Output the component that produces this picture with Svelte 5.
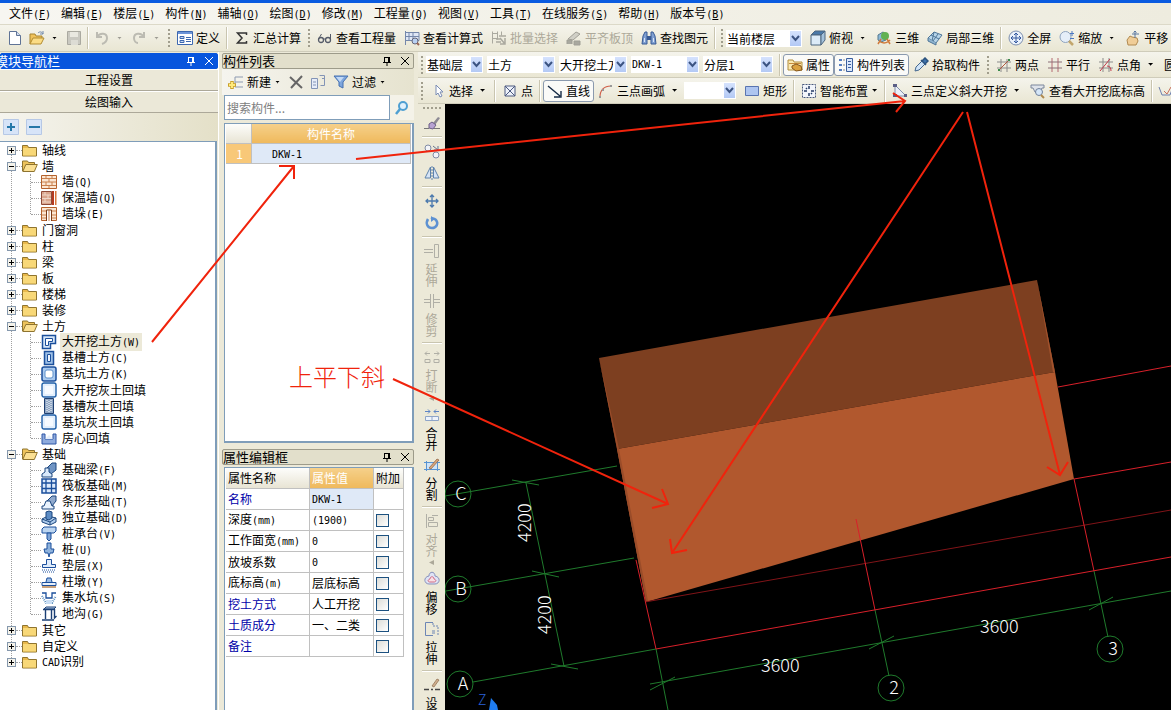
<script>
  const menus = ['文件(_F)', '编辑(_E)', '楼层(_L)', '构件(_N)', '辅轴(_O)', '绘图(_D)', '修改(_M)', '工程量(_Q)', '视图(_V)', '工具(_T)', '在线服务(_S)', '帮助(_H)', '版本号(_B)'];

  // 'sep' is an etched line, 'grip' the dotted toolbar handle
  const mainBar = [
    { icon: 'page' },
    { icon: 'open', caret: true },
    { icon: 'save', off: true },
    'sep',
    { icon: 'undo', off: true, caret: true },
    { icon: 'redo', off: true, caret: true },
    'grip',
    { icon: 'define', text: '定义' },
    'sep',
    { icon: 'sum', text: '汇总计算' },
    'grip',
    { icon: 'glasses', text: '查看工程量' },
    { icon: 'formula', text: '查看计算式' },
    { icon: 'batch', text: '批量选择', off: true },
    { icon: 'align', text: '平齐板顶', off: true },
    { icon: 'find', text: '查找图元' },
    'sep',
    'grip',
    { combo: '当前楼层', width: 'w76' },
    { icon: 'cube', text: '俯视', caret: true },
    { icon: 'orbit', text: '三维' },
    { icon: 'part3d', text: '局部三维' },
    'sep',
    { icon: 'fit', text: '全屏' },
    { icon: 'zoom', text: '缩放', caret: true },
    { icon: 'pan', text: '平移' },
  ];

  const pickBar = [
    'grip',
    { combo: '基础层', width: 'w57' },
    { combo: '土方', width: 'w68' },
    { combo: '大开挖土方', width: 'w68' },
    { combo: 'DKW-1', width: 'w68' },
    { combo: '分层1', width: 'w70' },
    'sep',
    { icon: 'props', text: '属性', on: true },
    { icon: 'list', text: '构件列表', on: true },
    { icon: 'dropper', text: '拾取构件' },
    'grip',
    { icon: 'twopt', text: '两点' },
    { icon: 'parallel', text: '平行' },
    { icon: 'angle', text: '点角', caret: true },
    { text: '圆' },
  ];

  const drawBar = [
    'grip',
    { icon: 'cursor', text: '选择', caret: true },
    'sep',
    { icon: 'point', text: '点' },
    'sep',
    { icon: 'line', text: '直线', on: true },
    { icon: 'arc', text: '三点画弧', caret: true },
    { combo: '', width: 'w52' },
    { icon: 'rect', text: '矩形' },
    'sep',
    { icon: 'smart', text: '智能布置', caret: true, tight: true },
    'sep',
    { icon: 'slope', text: '三点定义斜大开挖', caret: true },
    { icon: 'viewpit', text: '查看大开挖底标高' },
    'sep',
    { icon: 'edge', name: '放坡' },
  ];

  const sideBar = [
    { icon: 'erase', name: '删除' },
    'sep',
    { icon: 'copy', name: '复制' },
    { icon: 'mirror', name: '镜像' },
    'sep',
    { icon: 'move', name: '移动' },
    { icon: 'rotate', name: '旋转' },
    'sep',
    { icon: 'extend', text: '延伸', off: true },
    { icon: 'trim', text: '修剪', off: true },
    'sep',
    { icon: 'split', text: '打断', off: true, more: true },
    { icon: 'merge', text: '合并' },
    { icon: 'divide', text: '分割' },
    'sep',
    { icon: 'sidealign', text: '对齐', off: true, more: true },
    { icon: 'offset', text: '偏移' },
    { icon: 'stretch', text: '拉伸' },
    'sep',
    { icon: 'setup', text: '设置' },
  ];

  let selected = $state('大开挖土方(W)');
  let tree = $state([
    { text: '轴线' },
    {
      text: '墙',
      open: true,
      items: [
        { icon: 'wall', text: '墙(Q)' },
        { icon: 'wall2', text: '保温墙(Q)' },
        { icon: 'wall3', text: '墙垛(E)' },
      ],
    },
    { text: '门窗洞' },
    { text: '柱' },
    { text: '梁' },
    { text: '板' },
    { text: '楼梯' },
    { text: '装修' },
    {
      text: '土方',
      open: true,
      items: [
        { icon: 'pit', text: '大开挖土方(W)' },
        { icon: 'trench', text: '基槽土方(C)' },
        { icon: 'hole', text: '基坑土方(K)' },
        { icon: 'fill', text: '大开挖灰土回填' },
        { icon: 'trenchfill', text: '基槽灰土回填' },
        { icon: 'fill', text: '基坑灰土回填' },
        { icon: 'roomfill', text: '房心回填' },
      ],
    },
    {
      text: '基础',
      open: true,
      items: [
        { icon: 'fbeam', text: '基础梁(F)' },
        { icon: 'raft', text: '筏板基础(M)' },
        { icon: 'strip', text: '条形基础(T)' },
        { icon: 'pad', text: '独立基础(D)' },
        { icon: 'cap', text: '桩承台(V)' },
        { icon: 'pile', text: '桩(U)' },
        { icon: 'cushion', text: '垫层(X)' },
        { icon: 'pier', text: '柱墩(Y)' },
        { icon: 'sump', text: '集水坑(S)' },
        { icon: 'ditch', text: '地沟(G)' },
      ],
    },
    { text: '其它' },
    { text: '自定义' },
    { text: 'CAD识别' },
  ]);

  const props = [
    { name: '名称', value: 'DKW-1', blue: true, current: true },
    { name: '深度(mm)', value: '(1900)' },
    { name: '工作面宽(mm)', value: '0' },
    { name: '放坡系数', value: '0' },
    { name: '底标高(m)', value: '层底标高' },
    { name: '挖土方式', value: '人工开挖', blue: true },
    { name: '土质成分', value: '一、二类', blue: true },
    { name: '备注', value: '', blue: true },
  ];

  const fillBox = '<rect x="1" y="1" width="14" height="14" rx="2" fill="#e3effc" stroke="#1f5fa8" stroke-width="1.4"/><rect x="4" y="4" width="8" height="8" fill="#f6faff"/>';
  const grid = '<path d="M5 1v14M10.500 1v14M1 5h14M1 10.500h14"';

  const icons = {
    page: '<path d="M2.500 1.500h7l4 4v9h-11z" fill="#fff" stroke="#5f7396"/><path d="M9.500 1.500v4h4" fill="#cfdcf0" stroke="#5f7396"/>',
    open: '<path d="M1 14V4h5l1 2h6v3" fill="#f0c25a" stroke="#a8842e"/><path d="M1 14l3-6h11l-3 6z" fill="#fbdc85" stroke="#b38d32"/><path d="M9 3c2-2 4-1 5 1m0-3v3h-3" fill="none" stroke="#7089ad"/>',
    save: '<path d="M1.500 1.500h13v13h-13z" fill="#c9c8c0" stroke="#aaa9a0"/><path d="M4 2h8v5H4z" fill="#e9e8e0"/><path d="M5 10h7v5H5z" fill="#dddcd4"/>',
    undo: '<path d="M3 2v5h5M3 7c3-5 10-4 10 1 0 3-2 5-5 6" fill="none" stroke="#bcbbb2" stroke-width="2"/>',
    redo: '<path d="M13 2v5H8m5 0C10 2 3 3 3 8c0 3 2 5 4 5" fill="none" stroke="#bcbbb2" stroke-width="2"/>',
    define: '<path d="M.5 1.500h15v13H.5z" fill="#fff" stroke="#3d68b0"/><path d="M1 2h14v2H1z" fill="#6d95d8"/><path d="M3 6.500h4v2H3zM3 10.500h4v2H3z" fill="#c9daf5" stroke="#3d68b0"/><path d="M9 7.500h5M9 9.500h5M9 11.500h5" stroke="#3d68b0"/>',
    sum: '<path d="M12.500 5V3h-9l4.500 5-4.500 5h9v-2" fill="none" stroke="#333" stroke-width="1.500"/>',
    glasses: '<circle cx="4" cy="10" r="2.500" fill="none" stroke="#555b68" stroke-width="1.300"/><circle cx="11" cy="10" r="2.500" fill="none" stroke="#555b68" stroke-width="1.300"/><path d="M1.500 9l3-5M6.500 9h2M13.500 10V4" stroke="#555b68" fill="none"/>',
    formula: '<path d="M1.500 1v14M1 2.500h14v8H1M5 3v7M9 3v7M1 6.500h14" fill="#dfe7f6" stroke="#7487ab"/><circle cx="11" cy="11" r="3" fill="#b8d0f2" stroke="#667"/><path d="M13 13l2 2" stroke="#965" stroke-width="2"/>',
    batch: '<path d="M1.500 1.500v12M1 3.500h5M1 8.500h5M6.500 1.500v8M10.500 1.500v4" fill="none" stroke="#aaa99f"/><path d="M8 6h7M5 9h5M5 12h5M9 8l5 6M14 8v6H9" fill="none" stroke="#aaa99f" stroke-width="1.500"/>',
    align: '<path d="M2 9l8-7 4 2-7 6z" fill="#d0cfc6" stroke="#a09f96"/><path d="M1 14v-4h5v4M8 11h6v4H8z" fill="#a9a89f" stroke="#a09f96"/>',
    find: '<path d="M1 14l1-8 2-4h2v12zM15 14l-1-8-2-4h-2v12z" fill="#7f9fd2" stroke="#385a94"/><path d="M6 6h4v4H6z" fill="#385a94"/><path d="M3.500 8v4M12.500 8v4" stroke="#d7e4f8"/>',
    cube: '<path d="M1 5l4-4h10l-4 4z" fill="#4a79a8" stroke="#4d667f"/><path d="M1 5h10v10H1z" fill="#dcebf7" stroke="#4d667f"/><path d="M11 5l4-4v9l-4 5z" fill="#a4c2dc" stroke="#4d667f"/>',
    orbit: '<path d="M2 5l5-3 3 2v6l-5 2-3-2z" fill="#8bb8d8" stroke="#55788f"/><circle cx="9" cy="6" r="4" fill="#62b152"/><path d="M3 11c4 3 8 2 11-1M5 9l-3 5M11 9l3 5" fill="none" stroke="#d07a3a" stroke-width="1.500"/>',
    part3d: '<path d="M1 8l6-6 8 3-6 8z" fill="#b7d5ea" stroke="#4f7698"/><path d="M4 5l8 4M7 2L5 11M11 4l-5 7" stroke="#4f7698" fill="none"/><path d="M1 8v3l8 4v-2" fill="#8eb3cf" stroke="#4f7698"/>',
    fit: '<circle cx="8" cy="8" r="7" fill="#eaf1fb" stroke="#7d8fae"/><path d="M8 3v10M3 8h10M6 5l2-2 2 2M6 11l2 2 2-2M5 6L3 8l2 2M11 6l2 2-2 2" fill="none" stroke="#33589f"/>',
    zoom: '<circle cx="6.500" cy="7" r="5.500" fill="#e5eef8" stroke="#8ea3be"/><path d="M10 11l4 4" stroke="#c2a66c" stroke-width="2.500"/><path d="M13 1v5M11 3.500h4M11 8.500h4" stroke="#4b77c0"/>',
    pan: '<path d="M3 15l-1-5 3-4 2 1 5 1 1 3-2 4z" fill="#f0cd97" stroke="#b18a50"/><path d="M10 1v7M7 4h7M8.500 2.500L10 1l1.500 1.500" stroke="#5976a0" fill="none"/>',
    props: '<path d="M1 13V3h5l1 2h8v8z" fill="#fbe9b0" stroke="#b08d3c"/><path d="M2 6h12v1H2z" fill="#c58a3b"/><path d="M5 9l4-2 5 2 1 4-6 1-4-3z" fill="#dba23f" stroke="#86561c"/>',
    list: '<path d="M1 2h3v2H1zM1 7h3v2H1zM1 12h3v2H1z" fill="#577fc2"/><path d="M5 3h2M5 8h2M5 13h2" stroke="#888"/><path d="M8.500 1.500h6v13h-6z" fill="#dbe7fb" stroke="#3a5f9e"/><path d="M10 4.500h3M10 7.500h3M10 10.500h3" stroke="#3a5f9e"/>',
    dropper: '<path d="M2 14l1-4 6-6 3 3-6 6z" fill="#cfe3f7" stroke="#44688f"/><path d="M8 3l5 5M9 4l3-3 3 3-3 3z" fill="#3f74ad" stroke="#2c537f" stroke-width="1.500"/>',
    twopt: '<path d="M5 2v13M11 2v13M1 5h14M1 11h14" stroke="#8b8b8b"/><path d="M3 13L13 3" stroke="#b0573e"/><path d="M12 2h2v2h-2zM2 12h2v2H2z" fill="#3b8b4a"/>',
    parallel: '<path d="M5 1v14M11 1v14" stroke="#b46a72"/><path d="M1 5h14M1 11h14" stroke="#8b6f76"/>',
    angle: '<path d="M5 1v14M11 1v14M1 5h14M1 11h14" stroke="#8b8b8b"/><path d="M2 14L12 2M9 9c3 0 4 2 4 5" stroke="#c23a4b" fill="none"/>',
    cursor: '<path d="M6 2v10l2-2 2 4 2-1-2-4h3z" fill="#fff" stroke="#7a8db5"/>',
    point: '<path d="M3 3h10v10H3zM3 3l10 10M13 3L3 13" fill="#eef2fa" stroke="#4c5a80"/>',
    line: '<path d="M1 3l12 10M14 8v6H7" fill="none" stroke="#152a45" stroke-width="1.400"/>',
    arc: '<path d="M2 14C2 7 6 3 13 3" fill="none" stroke="#d0604a" stroke-width="1.200"/><path d="M1 13h2v2H1zM12 2h2v2h-2zM4 6h2v2H4z" fill="#999"/>',
    rect: '<path d="M1.500 3.500h13v9h-13z" fill="#aec5f0" stroke="#5974b0"/>',
    smart: '<path d="M1.500 1.500h13v13h-13z" fill="#f2f5fb" stroke="#48587c" stroke-dasharray="2 1"/><path d="M8 3v3M8 10v3M3 8h3M10 8h3M5 5l1 1M11 11l-1-1" stroke="#243a66" stroke-width="1.500"/>',
    slope: '<path d="M3 2v11h11M3 2l11 11" fill="#e9eef8" stroke="#8390aa"/><path d="M1 1h4v3H1zM1 11h4v3H1zM12 11h3v3h-3z" fill="#5b5f86"/>',
    viewpit: '<path d="M1 2h13v3h-2l-2 4H5L3 5H1z" fill="#dfe3ea" stroke="#7d879b"/><circle cx="9" cy="9" r="3.500" fill="#d5e6f8" stroke="#70809a"/><path d="M11 12l3 3" stroke="#b08a4e" stroke-width="2"/>',
    edge: '<path d="M1 4l3 8h8l3-8" fill="none" stroke="#6d7fae"/><path d="M6 8l3 3 4-7" fill="none" stroke="#c86f5c"/>',
    add: '<path d="M7 3h8M7 8h8M7 13h8M7 3v10" stroke="#8c99b0" fill="none"/><path d="M4 7v8M0 11h8" stroke="#c9a02a" stroke-width="3.500"/><path d="M4 8v6M1 11h6" stroke="#ffe97a" stroke-width="2"/>',
    del: '<path d="M2 3l12 11M14 2L3 14" stroke="#666" stroke-width="2" fill="none"/>',
    dup: '<path d="M1.500 4.500h6v10h-6z" fill="#e6ecf8" stroke="#8394b6"/><path d="M3 8h3M3 11h3" stroke="#8394b6"/><path d="M9.500 1.500h5v5M12 4.500h2.500v7h-4" fill="none" stroke="#8394b6"/>',
    filter: '<path d="M1 2h14L10 8v6l-4-2V8z" fill="#7ea6dd" stroke="#4470b1"/><path d="M3 3h8L7 8" fill="#c2d9f5"/>',
    search: '<circle cx="9" cy="6" r="4" fill="#dff0fc" stroke="#4e9fd2" stroke-width="2"/><path d="M6 9l-4 5" stroke="#4e9fd2" stroke-width="2.500"/>',
    plus: '<path d="M.5.5h15v15H.5z" fill="#d7e4f8" stroke="#b6c8e6"/><path d="M8 4v8M4 8h8" stroke="#2577a8" stroke-width="2"/>',
    minus: '<path d="M.5.5h15v15H.5z" fill="#d7e4f8" stroke="#b6c8e6"/><path d="M3 8h11" stroke="#2577a8" stroke-width="2"/>',
    pin: '<path d="M5.500 4v5M10 4v5M5 4.500h5M4 9.500h8M8 10v3" stroke="currentColor" fill="none"/><path d="M9 4h2v5H9z" fill="currentColor"/>',
    close: '<path d="M4 4l8 8M12 4l-8 8" stroke="currentColor" fill="none"/>',
    folder: '<path d="M.5 3.500h5l1 2h8v8.500H.5z" fill="#e9b94c" stroke="#8f742f"/><path d="M1 6h13v7.500H1z" fill="#f8d878"/>',
    folderopen: '<path d="M.5 13V3h5l1 1.500h6V7" fill="#edc35c" stroke="#8f742f"/><path d="M.8 13.500l3-7h11.500l-3 7z" fill="#fbe093" stroke="#8f742f"/>',
    wall: '<path d="M.5 1.500h15v13H.5z" fill="#fbe6d2" stroke="#b5622c"/><path d="M1 4.500h14M1 8h14M1 11.500h14M5 2v2.500M11 2v2.500M8 5v3M5 8v3M11 8v3M8 12v2" stroke="#c9804d"/>',
    wall2: '<path d="M.5 1.500h10v13H.5z" fill="#d9a58d" stroke="#8f4a38"/><path d="M1 5h9M1 8.500h9M1 12h9M4 2v3M7 5v3M4 9v3" stroke="#efd7c9"/><path d="M11 1h2v14h-2z" fill="#b53a20"/><path d="M14 1h1.500v14H14z" fill="#d8773c"/>',
    wall3: '<path d="M.5 1.500h15v13H.5z" fill="#fbe6d2" stroke="#b5622c"/><path d="M1 5h4M1 9h4M11 5h4M11 9h4M1 12h4M11 12h4" stroke="#c9804d"/><path d="M5.500 15V4h5v11" fill="#fff" stroke="#7c3c17"/><path d="M8 4v11" stroke="#c9804d"/>',
    pit: '<path d="M1.500 1.500h13v8h-5v5h-8z" fill="#d6e6f8" stroke="#1b4f9c" stroke-width="1.500"/><path d="M4.500 4.500h7v3h-4v4h-3z" fill="#fff" stroke="#1b4f9c"/>',
    trench: '<path d="M3.500 1.500h9v13h-9z" fill="#9dbfe6" stroke="#1b4f9c" stroke-width="1.500"/><path d="M6.500 4.500h3v7h-3z" fill="#eef5fd" stroke="#1b4f9c"/>',
    hole: '<rect x="1" y="1" width="14" height="14" rx="2" fill="#a9c9ee" stroke="#1b4f9c" stroke-width="1.500"/><rect x="4" y="4" width="8" height="8" rx="2" fill="#fff" stroke="#5f92cc"/>',
    fill: fillBox,
    trenchfill: '<path d="M3.500.5h9v15h-9z" fill="#8fa6c4" stroke="#1f3f70"/><path d="M6 2v12M8 3v12M10 2v12" stroke="#fff" stroke-dasharray="1 1"/>',
    roomfill: '<path d="M1 4v10h14V4h-3v5H4V4z" fill="#8fabdd" stroke="#2f57a6"/><path d="M4 9l4-4 4 4z" fill="#e4edfa"/>',
    fbeam: '<path d="M5 7l6-6h4v7l-5 4z" fill="#6f94c4" stroke="#1c477f"/><path d="M1 15v-3l3-2V6h4v4l3 2v3z" fill="#d9e9fa" stroke="#1c477f"/>',
    raft: '<path d="M1 1h14v14H1z" fill="#dceafb" stroke="#1b4f9c" stroke-width="1.500"/>' + grid + ' stroke="#1b4f9c" stroke-width="1.300"/>',
    strip: '<path d="M5 8l6-6h4v5l-4 5z" fill="#8fa9cd" stroke="#1c477f"/><path d="M1 15v-3h2l2-5h4l2 5h2v3z" fill="#eaf3fd" stroke="#1c477f"/>',
    pad: '<path d="M1 9l6-3 8 2v4l-6 3-8-3z" fill="#aecbeb" stroke="#1c477f"/><path d="M1 9l8 3 6-4M9 12v3" stroke="#1c477f" fill="none"/><path d="M5 9V2l3-1 3 1v6l-3 2z" fill="#5d8cc4" stroke="#1c477f"/>',
    cap: '<path d="M1 3l2-2h12v4l-2 2H1z" fill="#bcd5f0" stroke="#1b4f9c"/><path d="M6 7h4v6l-2 2-2-2z" fill="#7fa5d6" stroke="#1b4f9c"/>',
    pile: '<path d="M6 1h4v6h3l-1 4H9l-1 4-1-4H4L3 7h3z" fill="#8eb2dc" stroke="#1b4f9c"/>',
    cushion: '<path d="M5.500 1.500h5v5h4v3h-13v-3h4z" fill="#dfecfb" stroke="#1b4f9c"/><path d="M1 12h14M2 14h12" stroke="#1b4f9c" stroke-dasharray="1 1"/>',
    pier: '<path d="M5 8l1-4h4l1 4" fill="#9dbde4" stroke="#1b4f9c"/><path d="M1 8.500h14v3H1z" fill="#e6effa" stroke="#1b4f9c"/><path d="M1 12h14v2H1z" fill="#c9a27b"/>',
    sump: '<path d="M1 3h4v5h6V3h4" fill="none" stroke="#1b4f9c" stroke-width="1.300"/><path d="M1 6l4 7h6l4-7" fill="none" stroke="#4d85b8" stroke-width="2" stroke-dasharray="1 1"/><path d="M5 10h6v4H5z" fill="#c9def4"/>',
    ditch: '<path d="M3 3l2-2h10l-2 2z" fill="#bcd5f0" stroke="#1b3f74"/><path d="M2 3.500h11M4.500 4v9M10.500 4v9M1 14h12M13.500 3v9l2-2" fill="none" stroke="#1b3f74" stroke-width="1.400"/>',
    erase: '<path d="M9 8l5-6 2 1-5 7z" fill="#8d8a94"/><path d="M5 9l3-2 4 3-3 4-4-1z" fill="#b7a2d2" stroke="#6c5f86"/><path d="M0 13.500h5M10 13.500h6" stroke="#777"/>',
    copy: '<circle cx="4" cy="5" r="3" fill="#f3f4f8" stroke="#808ba5"/><circle cx="12" cy="12" r="3" fill="#f3f4f8" stroke="#808ba5"/><path d="M9 3l5 4M14 3v4h-4" fill="none" stroke="#667390"/>',
    mirror: '<path d="M6.500 2v11H1zM9.500 2v11H15z" fill="#d6e4f5" stroke="#5f83ac"/><path d="M8 1v14" stroke="#5f83ac" stroke-dasharray="2 1"/>',
    move: '<path d="M8 2v12M2 8h12M6 4l2-2 2 2M6 12l2 2 2-2M4 6L2 8l2 2M12 6l2 2-2 2" fill="none" stroke="#4b79ad" stroke-width="1.300"/>',
    rotate: '<path d="M4 4c-3 5 0 9 4 9s7-4 4-8c-1-1-3-2-5-1" fill="none" stroke="#5d91d2" stroke-width="2.500"/><path d="M7 1v6l4-3z" fill="#5d91d2"/>',
    extend: '<path d="M0 6.500h9M0 9.500h9" stroke="#b0afa6"/><path d="M10.500 1.500h4v13h-4z" fill="none" stroke="#b0afa6"/>',
    trim: '<path d="M0 6.500h6M0 9.500h6M10 6.500h6M10 9.500h6" stroke="#b0afa6"/><path d="M6.500 1v14M9.500 1v14" stroke="#b0afa6"/>',
    split: '<path d="M1 4.500h5M10 4.500h5M3 2.500l-2 2 2 2M13 2.500l2 2-2 2M1 10.500h5v3H1zM10 10.500h5v3h-5z" fill="none" stroke="#b0afa6"/>',
    merge: '<path d="M1 4.500h5M10 4.500h5M4 2.500l2 2-2 2M12 2.500l-2 2 2 2" fill="none" stroke="#5d84c6"/><path d="M1.500 9.500h13v4h-13zM8 9.500v4" fill="#eef3fb" stroke="#8fa5c8"/>',
    divide: '<path d="M0 5.500h16M0 12.500h16M2.500 4v10M13.500 4v10" stroke="#5893d2"/><path d="M3 6h10v6H3z" fill="#cfe3f8"/><path d="M5 11l8-9 2 1-8 9z" fill="#d8a67c" stroke="#8b5d3c" stroke-width=".7"/>',
    sidealign: '<path d="M2.500 1v14" stroke="#b0afa6"/><path d="M4.500 4.500h5v3h-5zM4.500 9.500h9v4h-9zM8 2.500h6" fill="none" stroke="#b0afa6"/>',
    offset: '<path d="M5 5c0-5 6-5 6 0 6 1 5 8 0 8H5c-5 0-6-7 0-8z" fill="#dfe3f5" stroke="#8791bd"/><path d="M6 8c0-3 4-3 4 0 3 1 2 3 0 3H6c-2 0-3-2 0-3z" fill="#f8dfe6" stroke="#d16b83"/>',
    stretch: '<path d="M9 1.500H1.500v13H9" fill="none" stroke="#6d86b5"/><path d="M9 2v3h5v10" fill="none" stroke="#6d86b5" stroke-dasharray="2 1"/><path d="M8 10h3M8 12h3" stroke="#6d86b5"/>',
    setup: '<path d="M8 9l5-7 2 1-5 7z" fill="#cfae8e" stroke="#8b6b4c" stroke-width=".7"/><path d="M0 12.500h5M11 12.500h5M7 12.500h2" stroke="#444" stroke-width="1.300"/>',
  };

  const bubbles = [
    { x: 458, y: 494, text: 'C' },
    { x: 458, y: 589, text: 'B' },
    { x: 460, y: 684, text: 'A' },
    { x: 891, y: 688, text: '2' },
    { x: 1110, y: 649, text: '3' },
  ];

  function split(text) {
    return text.split(/([\x20-\x7e]+)/).filter((s) => s);
  }

  function isLatin(s) {
    return /^[\x20-\x7e]/.test(s);
  }
</script>

{#snippet icon(name)}
  <svg class="icon" viewBox="0 0 16 16" aria-hidden="true">{@html icons[name]}</svg>
{/snippet}

{#snippet label(text)}
  <span class="label">{#each split(text) as s}{#if isLatin(s)}{@const p = s.split('_')}<span class="en">{#if p.length > 1}{p[0]}<u>{p[1][0]}</u>{p[1].slice(1)}{:else}{s}{/if}</span>{:else}{s}{/if}{/each}</span>
{/snippet}

{#snippet bar(items)}
  {#each items as item}
    {#if item === 'sep'}
      <span class="sep"></span>
    {:else if item === 'grip'}
      <span class="grip"></span>
    {:else if item.combo !== undefined}
      <span class="combo {item.width}">
        <select class:latin={isLatin(item.combo)} aria-label={item.combo || '画弧方式'}>
          <option>{item.combo}</option>
        </select>
        <svg viewBox="0 0 11 15" aria-hidden="true"><path d="M2 5l3.500 4L9 5" /></svg>
      </span>
    {:else}
      <button class="tool" class:bare={!item.text} class:on={item.on} disabled={item.off} aria-label={item.text ?? item.name ?? item.icon}>
        {#if item.icon}{@render icon(item.icon)}{/if}
        {#if item.text}{@render label(item.text)}{/if}
        {#if item.caret}<i class="caret" class:tight={item.tight}></i>{/if}
      </button>
    {/if}
  {/each}
{/snippet}

{#snippet title(text, active)}
  <header class="title" class:active>
    <h2>{text}</h2>
    <button aria-label="固定">{@render icon('pin')}</button>
    <button aria-label="关闭">{@render icon('close')}</button>
  </header>
{/snippet}

<div class="app">
  <nav class="menubar">
    {#each menus as m}
      <button>{@render label(m)}</button>
    {/each}
  </nav>
  <div class="toolbar main">{@render bar(mainBar)}</div>

  <div class="body">
    <aside class="nav">
      {@render title('模块导航栏', true)}
      <button class="section">工程设置</button>
      <button class="section">绘图输入</button>
      <div class="expand">
        <button aria-label="全部展开">{@render icon('plus')}</button>
        <button aria-label="全部折叠">{@render icon('minus')}</button>
      </div>
      <div class="tree">
        <ul class="roots">
          {#each tree as node}
            <li>
              <div class="row">
                <button class="toggle" class:closed={!node.open} aria-label="展开 {node.text}" onclick={() => (node.open = !node.open)}></button>
                {@render icon(node.open ? 'folderopen' : 'folder')}
                {@render label(node.text)}
              </div>
              {#if node.open && node.items}
                <ul class="leaves">
                  {#each node.items as leaf}
                    <li>
                      <button class="row leaf" class:selected={leaf.text === selected} onclick={() => (selected = leaf.text)}>
                        {@render icon(leaf.icon)}
                        {@render label(leaf.text)}
                      </button>
                    </li>
                  {/each}
                </ul>
              {/if}
            </li>
          {/each}
        </ul>
      </div>
    </aside>

    <aside class="panels">
      {@render title('构件列表', false)}
      <div class="toolbar small">
        <button class="tool">{@render icon('add')}{@render label('新建')}<i class="caret tight"></i></button>
        <button class="tool bare" aria-label="删除">{@render icon('del')}</button>
        <button class="tool bare" aria-label="复制">{@render icon('dup')}</button>
        <button class="tool">{@render icon('filter')}{@render label('过滤')}<i class="caret tight"></i></button>
      </div>
      <div class="search">
        <input type="text" placeholder="搜索构件..." aria-label="搜索构件" />
        <button aria-label="搜索">{@render icon('search')}</button>
      </div>
      <div class="box members">
        <table>
          <thead>
            <tr><th class="num"></th><th class="hot">构件名称</th></tr>
          </thead>
          <tbody>
            <tr><td class="num">1</td><td class="pick">{@render label('DKW-1')}</td></tr>
          </tbody>
        </table>
      </div>

      {@render title('属性编辑框', false)}
      <div class="box editor">
        <table>
          <thead>
            <tr><th>属性名称</th><th class="hot">属性值</th><th>附加</th></tr>
          </thead>
          <tbody>
            {#each props as p}
              <tr>
                <td class:blue={p.blue}>{@render label(p.name)}</td>
                <td class:pick={p.current}>{@render label(p.value)}</td>
                <td>{#if !p.current}<input type="checkbox" aria-label="附加 {p.name}" />{/if}</td>
              </tr>
            {/each}
          </tbody>
        </table>
      </div>
    </aside>

    <main>
      <div class="toolbar">{@render bar(pickBar)}</div>
      <div class="toolbar">{@render bar(drawBar)}</div>
      <div class="work">
        <div class="side">
          <span class="grip"></span>
          {#each sideBar as item}
            {#if item === 'sep'}
              <span class="sep"></span>
            {:else}
              <button disabled={item.off} aria-label={item.text ?? item.name}>
                {@render icon(item.icon)}
                {#if item.text}<span>{item.text}</span>{/if}
                {#if item.more}<i class="more"></i>{/if}
              </button>
            {/if}
          {/each}
        </div>
        <svg class="canvas" viewBox="445 104 726 606" preserveAspectRatio="xMinYMin slice">
          <path class="axis" d="M445 496L617 466M446 591L634 558M473 682L656 649M526 483L564 666" />
          <path class="axis" d="M512 480L539 485M532 571L559 577M551 664L578 669" />
          <path class="axis" d="M656 649L668 710M650 684L1171 591M875 610L889 676M1094 571L1108 637" />
          <path class="axis" d="M650 690L675 677M869 649L894 636M1089 610L1113 597" />
          <polygon fill="#7d3f20" points="599,358 1037,280 1055,372 617,449" />
          <polygon fill="#b1582e" points="617,449 1055,372 1074,479 646,602" />
          <path fill="#9a4c29" d="M599 358L617 449L646 602L648 601L619 449z" />
          <path fill="#a2522c" d="M1037 280L1053 372L1055 372z" />
          <path class="grid faint" d="M645 602L1171 510" />
          <path class="grid" d="M1058 387L1171 366M1074 479L1171 462M656 649L1171 557M636 560L656 649M856 519L875 610M1074 479L1094 571" />
          {#each bubbles as b}
            <circle class="axis" cx={b.x} cy={b.y} r="13" />
            <text x={b.x + 3} y={b.y + 6} text-anchor="middle">{b.text}</text>
          {/each}
          <text x="761" y="672">3600</text>
          <text x="980" y="633">3600</text>
          <text transform="translate(531 542) rotate(-90)">4200</text>
          <text transform="translate(551 634) rotate(-90)">4200</text>
          <text class="z" x="478" y="705">Z</text>
          <path fill="#1f7cf0" d="M491 698l6 7 1 5h-9z" />
        </svg>
      </div>
    </main>
  </div>

  <svg class="notes" viewBox="0 0 1171 710" preserveAspectRatio="xMinYMin slice">
    <path d="M152 342L294 166M279 166H294V179" />
    <path d="M356 159L905 101M893 93L905 101L896 112" />
    <path d="M963 112L672 553M670 539L672 553L687 550" />
    <path d="M967 112L1060 475M1047 467L1060 475L1068 462" />
    <path d="M393 379L668 504M662 489L668 504L652 508" />
    <text x="289" y="386">上平下斜</text>
  </svg>
</div>

<style>
  :global(body) {
    margin: 0;
    overflow: hidden;
  }

  .app {
    position: relative;
    display: flex;
    flex-direction: column;
    height: 100vh;
    overflow: hidden;
    box-sizing: border-box;
    border-top: 3px solid #0a5be0;
    background: #ece9d8;
    color: #000;
    font-family: 'Noto Sans CJK SC', sans-serif;
    font-size: 12px;
    line-height: 16px;
  }

  button {
    margin: 0;
    padding: 0;
    border: 0;
    background: none;
    color: inherit;
    font: inherit;
    white-space: nowrap;
  }

  button:disabled {
    color: #aca899;
  }

  .icon {
    flex: none;
    display: block;
    width: 16px;
    height: 16px;
  }

  .label {
    white-space: pre;
  }

  .en {
    font-family: 'DejaVu Sans Mono', monospace;
    font-size: 10px;
  }

  .menubar {
    flex: none;
    display: flex;
    gap: 10px;
    height: 22px;
    padding-left: 9px;
    background: linear-gradient(90deg, #f7f6f1, #eeecdf);
    border-bottom: 1px solid #dcd9c8;
    box-sizing: border-box;
  }

  .toolbar {
    flex: none;
    display: flex;
    align-items: center;
    height: 26px;
    box-sizing: border-box;
    border-bottom: 1px solid #cfccba;
    background: linear-gradient(#f5f4ec, #e9e6d3);
    overflow: hidden;
  }

  .toolbar.main {
    padding-left: 4px;
    height: 27px;
  }

  .tool {
    flex: none;
    display: flex;
    align-items: center;
    gap: 3px;
    height: 22px;
    padding: 0 4px;
  }

  .tool.bare {
    padding: 0 3px;
  }

  .tool.on {
    box-sizing: border-box;
    padding: 0 3px;
    border: 1px solid #8a99ae;
    border-radius: 3px;
    background: #fafaf8;
  }

  .caret {
    width: 12px;
    height: 3px;
    background: #000;
    clip-path: polygon(4px 0, 9px 0, 6px 3px, 7px 3px);
  }

  .caret.tight {
    width: 7px;
    clip-path: polygon(1px 0, 6px 0, 3px 3px, 4px 3px);
  }

  button:disabled .caret {
    opacity: 0.35;
  }

  .sep {
    flex: none;
    width: 1px;
    height: 22px;
    margin: 0 2px;
    background: #c9c5b0;
    border-right: 1px solid #fff;
  }

  .grip {
    flex: none;
    width: 2px;
    height: 18px;
    margin: 0 3px;
    background: repeating-linear-gradient(#a19e8d 0 2px, transparent 2px 4px);
  }

  .combo {
    flex: none;
    position: relative;
    height: 17px;
    margin-right: 4px;
    background: #fff;
  }

  .w52 { width: 52px; }
  .w57 { width: 57px; }
  .w68 { width: 68px; }
  .w70 { width: 70px; }
  .w76 { width: 76px; }

  .combo select {
    display: block;
    width: 100%;
    height: 17px;
    padding: 0 14px 0 1px;
    border: 0;
    appearance: none;
    background: none;
    color: #000;
    font: inherit;
    line-height: 17px;
  }

  .combo select.latin {
    font-family: 'DejaVu Sans Mono', monospace;
    font-size: 10px;
  }

  .combo svg {
    position: absolute;
    top: 1px;
    right: 1px;
    width: 11px;
    height: 15px;
    background: linear-gradient(#d5e2fd, #b3c9f5);
    pointer-events: none;
  }

  .combo path {
    fill: none;
    stroke: #3c5482;
    stroke-width: 2;
  }

  .body {
    flex: 1;
    display: flex;
    min-height: 0;
  }

  .nav {
    flex: none;
    display: flex;
    flex-direction: column;
    width: 219px;
    margin-right: 3px;
    box-sizing: border-box;
    border-right: 1px solid #fff;
  }

  .title {
    flex: none;
    display: flex;
    align-items: center;
    height: 16px;
    margin-top: 1px;
    box-sizing: border-box;
    border: 1px solid #9d9b8a;
    border-radius: 2px;
    background: #e2dfcb;
  }

  .title.active {
    border-color: #0855dd;
    background: #0855dd;
    color: #fff;
  }

  .title h2 {
    flex: 1;
    margin: 0;
    font-size: 13px;
    font-weight: 400;
    line-height: 16px;
    white-space: nowrap;
  }

  .title.active h2 {
    text-indent: -6px;
  }

  .title button {
    padding-left: 2px;
  }

  .section {
    flex: none;
    height: 22px;
    border-bottom: 1px solid #aca899;
    border-top: 1px solid #fff;
    background: #ebe8d8;
    text-align: center;
  }

  .expand {
    flex: none;
    display: flex;
    gap: 7px;
    align-items: center;
    height: 28px;
    padding-left: 3px;
    background: linear-gradient(90deg, #f5f4ee, #e4e0c8);
  }

  .tree {
    flex: 1;
    min-height: 0;
    overflow: hidden;
    margin-right: 1px;
    border: 1px solid #7f9db9;
    border-width: 1px 2px 0 0;
    background: #fff;
  }

  ul {
    position: relative;
    margin: 0;
    padding: 0;
    list-style: none;
  }

  .roots::before,
  .leaves::before {
    content: '';
    position: absolute;
    top: 8px;
    bottom: 8px;
    left: 11px;
    border-left: 1px dotted #a0a0a0;
  }

  .leaves::before {
    top: 0;
    left: 30px;
  }

  .row {
    position: relative;
    display: flex;
    align-items: center;
    height: 16px;
    padding-left: 7px;
  }

  .row::before {
    content: '';
    position: absolute;
    top: 8px;
    left: 16px;
    width: 6px;
    border-top: 1px dotted #a0a0a0;
  }

  .row.leaf {
    padding-left: 41px;
  }

  .row.leaf::before {
    left: 31px;
    width: 10px;
  }

  .row .icon {
    margin: 0 2px 0 6px;
  }

  .row.leaf .icon {
    margin: 0 3px 0 0;
  }

  .row .label {
    padding: 0 2px;
  }

  .selected .label {
    background: #ece9d8;
  }

  .toggle {
    position: relative;
    width: 9px;
    height: 9px;
    border: 1px solid #8598ad;
    background:
      linear-gradient(#000, #000) center / 5px 1px no-repeat,
      #f4f2ea;
  }

  .toggle.closed {
    background:
      linear-gradient(#000, #000) center / 5px 1px no-repeat,
      linear-gradient(#000, #000) center / 1px 5px no-repeat,
      #f4f2ea;
  }

  .panels {
    flex: none;
    display: flex;
    flex-direction: column;
    width: 192px;
    margin-right: 4px;
  }

  .toolbar.small {
    height: 26px;
    padding-left: 2px;
    border: 0;
    background: linear-gradient(90deg, #f5f4ee, #e6e3cf);
  }

  .search {
    flex: none;
    display: flex;
    height: 25px;
    margin-left: 2px;
  }

  .search input {
    flex: 1;
    min-width: 0;
    padding: 0 2px;
    border: 1px solid #7f9db9;
    background: #fff;
    font: inherit;
  }

  .search input::placeholder {
    color: #808080;
  }

  .search button {
    padding: 0 4px;
    background: #f4f2e8;
  }

  .box {
    margin: 3px 0 0 2px;
    padding: 0 1px;
    overflow: hidden;
    border: 1px solid #7f9db9;
    border-right-width: 2px;
    border-bottom-width: 2px;
    background: #fff;
  }

  .members {
    height: 317px;
    margin-bottom: 5px;
  }

  .editor {
    flex: 1;
    margin-top: 2px;
    padding-right: 8px;
    border-bottom: 0;
  }

  table {
    width: 100%;
    border-collapse: collapse;
    table-layout: fixed;
  }

  th,
  td {
    height: 20px;
    padding: 0 0 0 2px;
    border-right: 1px solid #c0c0c0;
    border-bottom: 1px solid #c0c0c0;
    font-weight: 400;
    text-align: left;
    white-space: nowrap;
  }

  th {
    background: linear-gradient(#fdfdfb, #e8e4d4);
  }

  th.hot {
    background: linear-gradient(#f5d08a, #efb95c);
    color: #fff;
  }

  td.pick {
    background: #dfe9f7;
  }

  td.blue {
    color: #0000a8;
  }

  .members th,
  .members td {
    height: 19px;
  }

  .members th.hot {
    padding: 0;
    text-align: center;
  }

  .members .num {
    width: 23px;
    text-align: center;
  }

  .members td.num {
    background: #f8c878;
    color: #fff;
  }

  .members td.pick {
    padding-left: 20px;
  }

  .editor th:nth-child(1) { width: 81px; }
  .editor th:nth-child(2) { width: 61px; }

  input[type='checkbox'] {
    display: block;
    width: 13px;
    height: 13px;
    margin: 0;
    border: 1px solid #1c5180;
    appearance: none;
    background: linear-gradient(135deg, #dcdcd7, #fff);
  }

  main {
    flex: 1;
    display: flex;
    flex-direction: column;
    min-width: 0;
  }

  .work {
    flex: 1;
    display: flex;
    min-height: 0;
  }

  .side {
    flex: none;
    display: flex;
    flex-direction: column;
    align-items: center;
    width: 27px;
    overflow: hidden;
  }

  .side .grip {
    width: 18px;
    height: 2px;
    margin: 3px 0;
    background: repeating-linear-gradient(90deg, #a19e8d 0 2px, transparent 2px 4px);
  }

  .side .sep {
    width: 20px;
    height: 1px;
    margin: 2px 0;
    border: 0;
    border-bottom: 1px solid #fff;
  }

  .side button {
    flex: none;
    display: flex;
    flex-direction: column;
    align-items: center;
    padding: 3px 0;
  }

  .side button span {
    width: 12px;
    margin-top: 4px;
    line-height: 12px;
    white-space: normal;
  }

  .more {
    width: 5px;
    height: 5px;
    margin-top: 3px;
    background: #aca899;
    clip-path: polygon(100% 0, 100% 100%, 0 50%);
  }

  .canvas {
    flex: 1;
    display: block;
    min-width: 0;
    height: 100%;
    background: #000;
  }

  .axis,
  .grid {
    fill: none;
    stroke: #1f7a2c;
  }

  .grid {
    stroke: #d8202a;
  }

  .grid.faint {
    stroke: #801418;
  }

  .canvas text {
    fill: #fff;
    font-size: 18px;
    font-weight: 300;
  }

  .canvas .z {
    fill: #2a62d8;
    font-size: 14px;
  }

  .notes {
    position: absolute;
    top: -3px;
    left: 0;
    width: 100%;
    height: 100vh;
    pointer-events: none;
  }

  .notes path {
    fill: none;
    stroke: #f0230c;
    stroke-width: 2;
  }

  .notes text {
    fill: #f0230c;
    font-size: 24px;
    font-weight: 300;
  }
</style>
